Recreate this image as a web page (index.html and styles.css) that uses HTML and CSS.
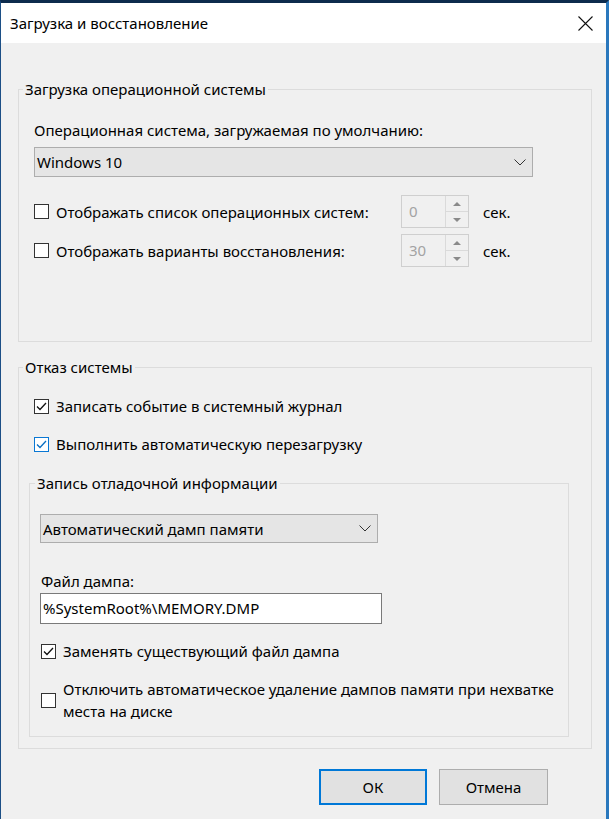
FILE: index.html
```
<!DOCTYPE html>
<html lang="ru">
<head>
<meta charset="utf-8">
<title>Загрузка и восстановление</title>
<link rel="stylesheet" href="styles.css">
</head>
<body>
<div class="window">
  <div class="titlebar">
    <span class="title">Загрузка и восстановление</span>
    <svg class="close" width="15" height="15" viewBox="0 0 15 15"><path d="M0.5 0.5 L14.5 14.5 M14.5 0.5 L0.5 14.5" stroke="#111" stroke-width="1.1" fill="none"/></svg>
  </div>
  <div class="content">
    <fieldset class="group g1">
      <legend>Загрузка операционной системы</legend>
      <div class="label">Операционная система, загружаемая по умолчанию:</div>
      <div class="combo combo-os">
        <span>Windows 10</span>
        <svg class="chev" width="12" height="7" viewBox="0 0 12 7"><path d="M0.5 0.5 L6 6 L11.5 0.5" stroke="#333" stroke-width="1" fill="none"/></svg>
      </div>
      <div class="spinrow">
        <div class="check"><span class="box"></span><span>Отображать список операционных систем:</span></div>
        <div class="spin"><span class="val">0</span><span class="arrows"><span class="arr up"></span><span class="arr down"></span></span></div>
        <span class="unit">сек.</span>
      </div>
      <div class="spinrow second">
        <div class="check"><span class="box"></span><span>Отображать варианты восстановления:</span></div>
        <div class="spin"><span class="val">30</span><span class="arrows"><span class="arr up"></span><span class="arr down"></span></span></div>
        <span class="unit">сек.</span>
      </div>
    </fieldset>

    <fieldset class="group g2">
      <legend>Отказ системы</legend>
      <div class="check row-a"><span class="box"><svg width="13" height="13" viewBox="0 0 13 13"><path d="M2 6.5 L5 9.5 L11 3" stroke="#111" stroke-width="1.3" fill="none"/></svg></span><span>Записать событие в системный журнал</span></div>
      <div class="check row-b"><span class="box hover"><svg width="13" height="13" viewBox="0 0 13 13"><path d="M2 6.5 L5 9.5 L11 3" stroke="#0a6fc2" stroke-width="1.3" fill="none"/></svg></span><span>Выполнить автоматическую перезагрузку</span></div>

      <fieldset class="group inner">
        <legend>Запись отладочной информации</legend>
        <div class="combo combo-dump">
          <span>Автоматический дамп памяти</span>
          <svg class="chev" width="12" height="7" viewBox="0 0 12 7"><path d="M0.5 0.5 L6 6 L11.5 0.5" stroke="#333" stroke-width="1" fill="none"/></svg>
        </div>
        <div class="label file-label">Файл дампа:</div>
        <div class="textbox">%SystemRoot%\MEMORY.DMP</div>
        <div class="check row-c"><span class="box"><svg width="13" height="13" viewBox="0 0 13 13"><path d="M2 6.5 L5 9.5 L11 3" stroke="#111" stroke-width="1.3" fill="none"/></svg></span><span>Заменять существующий файл дампа</span></div>
        <div class="check row-d"><span class="box"></span><span class="two">Отключить автоматическое удаление дампов памяти при нехватке<br>места на диске</span></div>
      </fieldset>
    </fieldset>

    <div class="buttons">
      <button class="btn default">ОК</button>
      <button class="btn">Отмена</button>
    </div>
  </div>
</div>
</body>
</html>
```
FILE: styles.css
```
* { box-sizing: border-box; }
html, body { margin: 0; padding: 0; }
body {
  width: 609px;
  height: 819px;
  overflow: hidden;
  background: #f0f0f0;
  font-family: "Noto Sans", "Segoe UI", sans-serif;
  font-size: 15px;
  color: #000;
}
.window {
  height: 819px;
  border-top: 3px solid #0d2b4d;
  border-left: 1px solid #1c4f86;
  border-right: 3px solid #2a78bd;
  background: #f0f0f0;
  display: flex;
  flex-direction: column;
}
.titlebar {
  height: 40px;
  background: #fff;
  display: flex;
  align-items: center;
  justify-content: space-between;
  padding: 0 13px 0 9px;
}
.title { line-height: 20px; }
.close { display: block; }

.content { padding: 36px 14px 0 17px; }

.group {
  margin: 0;
  border: 1px solid #dcdcdc;
  min-width: 0;
}
.group legend { padding: 0 2px; line-height: 20px; }

.g1 { padding: 21px 14px 74px 15px; }
.g1 legend { margin-left: -11px; }

.label { line-height: 20px; }

.combo {
  height: 30px;
  border: 1px solid #adadad;
  background: #e5e5e5;
  display: flex;
  align-items: center;
  justify-content: space-between;
  padding: 0 6px 0 2px;
}
.chev { display: block; }
.combo-os { width: 499px; margin-top: 7px; }

.spinrow {
  display: grid;
  grid-template-columns: 353px 68px auto;
  column-gap: 14px;
  align-items: center;
  height: 33px;
  margin-top: 18px;
}
.spinrow.second { margin-top: 6px; }

.check { display: flex; align-items: center; line-height: 20px; }
.box {
  width: 15px;
  height: 15px;
  flex: none;
  border: 1px solid #333;
  background: #fff;
  margin-right: 7px;
  display: flex;
  align-items: center;
  justify-content: center;
}
.box svg { display: block; }
.box.hover { border-color: #0a78d4; }

.spin {
  height: 33px;
  border: 1px solid #cfcfcf;
  background: #f0f0f0;
  display: flex;
}
.val { flex: 1; color: #a3a3a3; padding-left: 7px; line-height: 31px; }
.arrows {
  width: 23px;
  border-left: 1px solid #dadada;
  display: flex;
  flex-direction: column;
}
.arr { flex: 1; display: flex; align-items: center; justify-content: center; }
.arr.up { border-bottom: 1px solid #dadada; }
.arr.up::before {
  content: "";
  border-left: 4px solid transparent;
  border-right: 4px solid transparent;
  border-bottom: 4px solid #8a8a8a;
}
.arr.down::before {
  content: "";
  border-left: 4px solid transparent;
  border-right: 4px solid transparent;
  border-top: 4px solid #8a8a8a;
}
.unit { line-height: 20px; }

.g2 { margin-top: 15px; padding: 19px 22px 11px 10px; }
.g2 > legend { margin-left: -6px; }
.g2 > .check { padding-left: 5px; }
.row-b { margin-top: 18px; }

.inner { margin-top: 19px; padding: 21px 10px 14px 10px; }
.inner > legend { margin-left: -5px; }
.combo-dump { width: 338px; height: 29px; }
.file-label { margin-top: 28px; padding-left: 1px; }
.textbox {
  width: 342px;
  height: 31px;
  margin-top: 2px;
  background: #fff;
  border: 1px solid #7a7a7a;
  padding-left: 2px;
  line-height: 29px;
}
.inner > .check { padding-left: 1px; }
.row-c { margin-top: 17px; }
.row-d { margin-top: 17px; }
.two { line-height: 22px; }

.buttons {
  display: flex;
  justify-content: flex-end;
  gap: 12px;
  margin-top: 20px;
  padding-right: 44px;
}
.btn {
  height: 36px;
  width: 109px;
  font: inherit;
  color: #000;
  background: #e1e1e1;
  border: 1px solid #adadad;
  padding: 0;
}
.btn.default { width: 108px; border: 2px solid #0078d7; }
```
